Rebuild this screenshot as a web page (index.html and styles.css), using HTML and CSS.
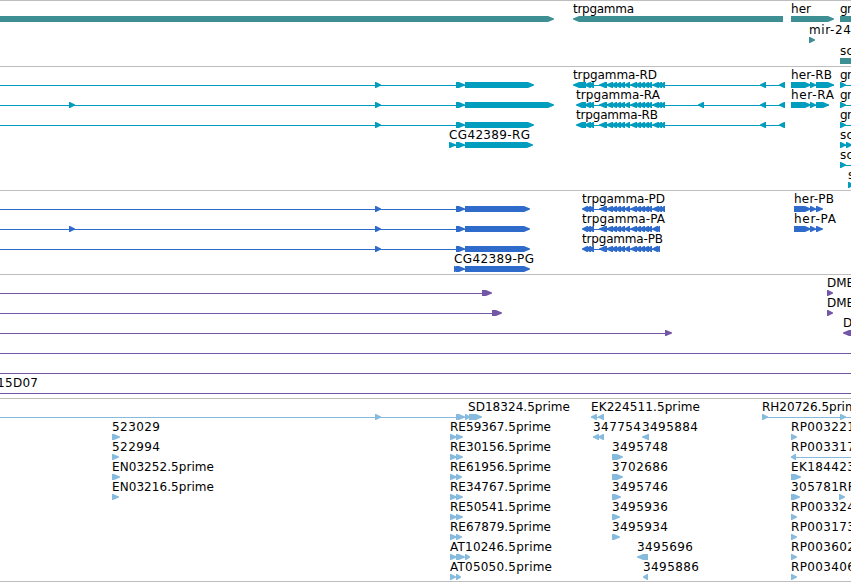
FILE: index.html
```html
<html>
  <head>
    <meta charset="utf-8">
    <title>Genome Browser</title>
    <link rel="stylesheet" href="styles.css">
  </head>
  <body>
    <div id="tracks"></div>
    <script type="text/javascript" src="tracks.js"></script>
  </body>
</html>
```
FILE: styles.css
```css
body
  {
  margin: 0;
  background: #ffffff;
  overflow: hidden;
  }

#tracks
  {
  height: 582px;
  overflow: hidden;
  }

.track
  {
  display: block;
  box-sizing: border-box;
  width: 100%;
  border-top: 1px solid #bebebe;
  }

.track:last-child
  {
  border-bottom: 1px solid #bebebe;
  }

.track text
  {
  font-family: "DejaVu Sans", sans-serif;
  font-size: 12px;
  fill: #000000;
  }

.gene
  {
  fill: #3d8f94;
  }

.transcript
  {
  fill: #009dbf;
  }

.protein
  {
  fill: #2f6bcb;
  }

.affy
  {
  fill: #7456a6;
  }

.est
  {
  fill: #87bbdd;
  }
```
FILE: tracks.js
```js
// Labels are [x, end, text], lines are [from, to],
// blocks are [from, to, direction]: 1 right, -1 left, 0 no arrow head.
var coding = [
  [599, 607, -1], [606, 613, -1], [611, 617, -1], [615, 621, -1],
  [619, 625, -1], [624, 630, -1], [630, 637, -1], [635, 641, -1],
  [639, 645, -1], [643, 649, -1], [647, 652, -1]
];
var longEnd = coding.concat([[652, 659, -1], [656, 662, -1], [660, 665, -1]]);
var shortEnd = coding.concat([[652, 658, -1], [656, 660, -1]]);
var utr = [[584, 591, -1], [588, 594, -1]];
var cds = [[582, 588, -1], [585, 591, -1], [588, 594, -1]];
var promoter = [[760, 766, -1], [779, 785, -1]];

var tracks = [
  {
  type: "gene", height: 66, pitch: 21,
  rows: [
    { labels: [[573, 634, "trpgamma"], [791, 811, "her"], [840, 852, "gr"]],
      blocks: [[-10, 554, 1], [573, 783, -1], [791, 834, 1], [840, 860, 0]] },
    { labels: [[809, 851, "mir-24"]], blocks: [[809, 815, 1]] },
    { labels: [[840, 853, "sc"]], blocks: [[840, 860, 0]] }
    ]
  },
  {
  type: "transcript", height: 124, pitch: 20,
  rows: [
    { labels: [[573, 657, "trpgamma-RD"], [791, 832, "her-RB"], [840, 852, "gr"]],
      lines: [[0, 465], [590, 785], [791, 834], [840, 851]],
      blocks: [[375, 381, 1], [456, 465, 1], [465, 534, 1], [573, 586, -1],
        [791, 811, 1], [810, 816, 1], [816, 834, 1], [840, 846, 1]].concat(utr, longEnd, promoter) },
    { labels: [[576, 660, "trpgamma-RA"], [791, 834, "her-RA"], [840, 852, "gr"]],
      lines: [[0, 465], [590, 785], [791, 829], [840, 851]],
      blocks: [[69, 75, 1], [375, 381, 1], [456, 465, 1], [465, 554, 1], [576, 586, -1],
        [698, 704, -1], [791, 811, 1], [810, 816, 1], [816, 829, 1], [840, 846, 1]].concat(utr, longEnd, promoter) },
    { labels: [[576, 658, "trpgamma-RB"], [840, 852, "gr"]],
      lines: [[0, 465], [590, 785], [840, 851]],
      blocks: [[375, 381, 1], [456, 465, 1], [465, 534, 1], [576, 586, -1],
        [840, 846, 1]].concat(utr, longEnd, promoter) },
    { labels: [[449, 530, "CG42389-RG"], [840, 853, "sc"]],
      lines: [[449, 465], [840, 851]],
      blocks: [[449, 456, 1], [456, 465, 1], [465, 533, 1], [840, 846, 1], [846, 852, 1]] },
    { labels: [[840, 853, "sc"]], lines: [[840, 851]], blocks: [[840, 846, 1]] },
    { labels: [[848, 854, "s"]], blocks: [[848, 854, 1]] }
    ]
  },
  {
  type: "protein", height: 84, pitch: 20,
  rows: [
    { labels: [[582, 665, "trpgamma-PD"], [794, 834, "her-PB"]],
      lines: [[0, 465], [590, 665], [794, 822]],
      blocks: [[375, 381, 1], [456, 465, 1], [465, 530, 1],
        [794, 811, 1], [810, 816, 1], [816, 823, 1]].concat(cds, longEnd) },
    { labels: [[582, 665, "trpgamma-PA"], [794, 836, "her-PA"]],
      lines: [[0, 465], [590, 660], [794, 822]],
      blocks: [[69, 75, 1], [375, 381, 1], [456, 465, 1], [465, 530, 1],
        [794, 811, 1], [810, 816, 1], [816, 823, 1]].concat(cds, shortEnd) },
    { labels: [[582, 663, "trpgamma-PB"]],
      lines: [[0, 465], [590, 660]],
      blocks: [[375, 381, 1], [456, 465, 1], [465, 530, 1]].concat(cds, shortEnd) },
    { labels: [[454, 534, "CG42389-PG"]],
      lines: [[454, 465]],
      blocks: [[454, 459, 1], [456, 465, 1], [465, 530, 1]] }
    ]
  },
  {
  type: "affy", height: 124, pitch: 20,
  rows: [
    { labels: [[827, 854, "DME"]], lines: [[0, 482]], blocks: [[482, 492, 1], [827, 833, 1]] },
    { labels: [[827, 854, "DME"]], lines: [[0, 492]], blocks: [[492, 502, 1], [827, 833, 1]] },
    { labels: [[843, 852, "D"]], lines: [[0, 666]], blocks: [[665, 672, 1], [843, 860, -1]] },
    { lines: [[0, 851]] },
    { lines: [[0, 851]] },
    { labels: [[-3, 38, "15D07"]], lines: [[0, 851]] }
    ]
  },
  {
  type: "est", height: 184, pitch: 20,
  rows: [
    { labels: [[468, 570, "SD18324.5prime"], [591, 700, "EK224511.5prime"], [762, 864, "RH20726.5prime"]],
      lines: [[0, 469], [591, 604], [762, 851]],
      blocks: [[375, 381, 1], [456, 465, 1], [465, 470, 1], [469, 482, 1],
        [591, 597, -1], [598, 604, -1], [762, 768, 1], [840, 846, 1]] },
    { labels: [[112, 160, "523029"], [450, 551, "RE59367.5prime"], [593, 641, "347754"],
        [642, 698, "3495884"], [791, 855, "RP003221"]],
      lines: [[593, 604]],
      blocks: [[112, 120, 1], [450, 457, 1], [456, 463, 1], [593, 599, -1], [598, 604, -1],
        [642, 649, -1], [791, 797, 1]] },
    { labels: [[112, 160, "522994"], [450, 551, "RE30156.5prime"], [612, 668, "3495748"], [791, 855, "RP003317"]],
      lines: [[791, 851]],
      blocks: [[112, 119, 1], [450, 457, 1], [456, 463, 1], [612, 623, 1], [791, 796, -1]] },
    { labels: [[112, 214, "EN03252.5prime"], [450, 551, "RE61956.5prime"], [612, 668, "3702686"], [791, 855, "EK184423"]],
      blocks: [[112, 120, 1], [450, 457, 1], [456, 462, 1], [612, 623, 1], [791, 801, 1]] },
    { labels: [[112, 214, "EN03216.5prime"], [450, 551, "RE34767.5prime"], [612, 668, "3495746"],
        [791, 839, "305781"], [839, 855, "RP"]],
      blocks: [[112, 119, 1], [450, 457, 1], [456, 463, 1], [612, 621, 1], [791, 800, 1], [839, 845, 1]] },
    { labels: [[450, 551, "RE50541.5prime"], [612, 668, "3495936"], [791, 855, "RP003324"]],
      blocks: [[450, 457, 1], [456, 463, 1], [612, 620, 1], [791, 797, 1]] },
    { labels: [[450, 551, "RE67879.5prime"], [612, 668, "3495934"], [791, 855, "RP003173"]],
      blocks: [[450, 457, 1], [456, 462, 1], [612, 620, 1], [791, 797, 1]] },
    { labels: [[450, 552, "AT10246.5prime"], [637, 693, "3495696"], [791, 855, "RP003602"]],
      blocks: [[450, 457, 1], [456, 465, 1], [465, 470, 1], [637, 648, -1], [791, 797, 1]] },
    { labels: [[450, 552, "AT05050.5prime"], [643, 699, "3495886"], [791, 855, "RP003406"]],
      blocks: [[450, 456, 1], [456, 461, 1], [643, 648, -1], [791, 797, 1]] }
    ]
  }
];

function add(parent, name, attributes)
  {
  var node = document.createElementNS("http://www.w3.org/2000/svg", name);

  for(var key in attributes)
    node.setAttribute(key, attributes[key]);

  parent.appendChild(node);

  return node;
  }

// Outline of a block with its slightly blunt arrow head.
function blockPoints(from, to, direction, y)
  {
  var head = Math.min(6, to - from - 1);

  if(direction === 0)
    return [from, y, to, y, to, y + 6, from, y + 6].join(" ");

  if(direction < 0)
    return [to, y, from + head, y, from, y + 2.5, from, y + 3.5, from + head, y + 6, to, y + 6].join(" ");

  return [from, y, to - head, y, to, y + 2.5, to, y + 3.5, to - head, y + 6, from, y + 6].join(" ");
  }

tracks.forEach(
  function(track)
    {
    var svg = add(document.getElementById("tracks"), "svg", { "class": "track", height: track.height });

    track.rows.forEach(
      function(row, index)
        {
        // The track border takes the first pixel.
        var top = index * track.pitch - 1;

        (row.lines || []).forEach(
          function(line)
            {
            add(svg, "rect", { "class": track.type, x: line[0], y: top + 19, width: line[1] - line[0], height: 1 });
            });

        (row.blocks || []).forEach(
          function(block)
            {
            add(svg, "polygon", { "class": track.type, points: blockPoints(block[0], block[1], block[2], top + 16) });
            });

        (row.labels || []).forEach(
          function(label)
            {
            var text = add(svg, "text", { x: label[0], y: top + 13, textLength: label[1] - label[0] });
            text.textContent = label[2];
            });
        });
    });
```
